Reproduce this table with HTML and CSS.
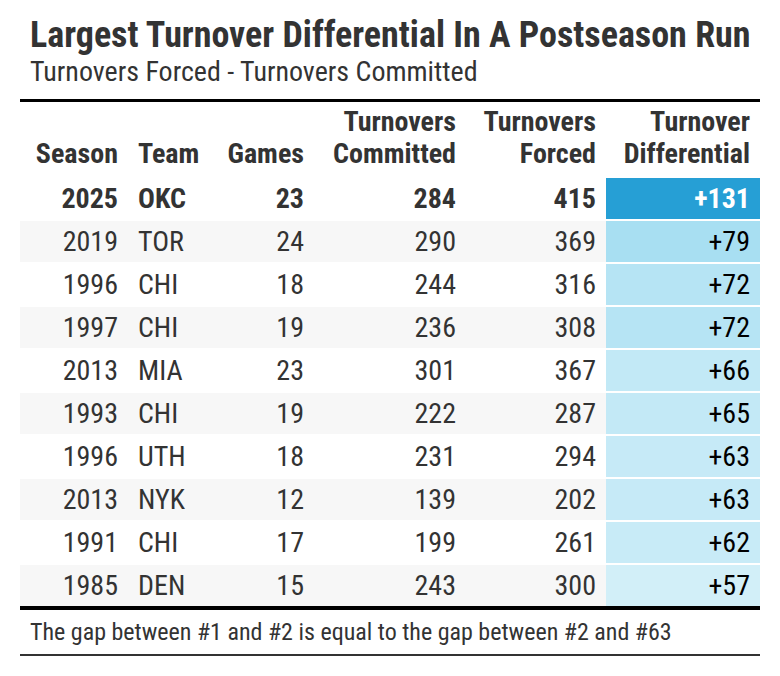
FILE: index.html
```html
<!DOCTYPE html>
<html>
<head>
<meta charset="utf-8">
<link rel="stylesheet" href="styles.css">
</head>
<body>
<div class="wrap">
  <div class="head">
    <h1 class="title">Largest Turnover Differential In A Postseason Run</h1>
    <div class="subtitle">Turnovers Forced - Turnovers Committed</div>
  </div>
  <table class="tbl">
    <colgroup>
      <col class="c-season"><col class="c-team"><col class="c-games"><col class="c-com"><col class="c-for"><col class="c-diff">
    </colgroup>
    <thead>
      <tr>
        <th class="r">Season</th>
        <th class="l">Team</th>
        <th class="r">Games</th>
        <th class="r">Turnovers<br>Committed</th>
        <th class="r">Turnovers<br>Forced</th>
        <th class="r">Turnover<br>Differential</th>
      </tr>
    </thead>
    <tbody>
      <tr class="top">
        <td class="r">2025</td><td class="l">OKC</td><td class="r">23</td><td class="r">284</td><td class="r">415</td><td class="r diff dark" style="background:#269fd5">+131</td>
      </tr>
      <tr class="alt">
        <td class="r">2019</td><td class="l">TOR</td><td class="r">24</td><td class="r">290</td><td class="r">369</td><td class="r diff" style="background:#a8dff2">+79</td>
      </tr>
      <tr>
        <td class="r">1996</td><td class="l">CHI</td><td class="r">18</td><td class="r">244</td><td class="r">316</td><td class="r diff" style="background:#b6e4f4">+72</td>
      </tr>
      <tr class="alt">
        <td class="r">1997</td><td class="l">CHI</td><td class="r">19</td><td class="r">236</td><td class="r">308</td><td class="r diff" style="background:#b6e4f4">+72</td>
      </tr>
      <tr>
        <td class="r">2013</td><td class="l">MIA</td><td class="r">23</td><td class="r">301</td><td class="r">367</td><td class="r diff" style="background:#c2e9f6">+66</td>
      </tr>
      <tr class="alt">
        <td class="r">1993</td><td class="l">CHI</td><td class="r">19</td><td class="r">222</td><td class="r">287</td><td class="r diff" style="background:#c3e9f6">+65</td>
      </tr>
      <tr>
        <td class="r">1996</td><td class="l">UTH</td><td class="r">18</td><td class="r">231</td><td class="r">294</td><td class="r diff" style="background:#c6eaf7">+63</td>
      </tr>
      <tr class="alt">
        <td class="r">2013</td><td class="l">NYK</td><td class="r">12</td><td class="r">139</td><td class="r">202</td><td class="r diff" style="background:#c6eaf7">+63</td>
      </tr>
      <tr>
        <td class="r">1991</td><td class="l">CHI</td><td class="r">17</td><td class="r">199</td><td class="r">261</td><td class="r diff" style="background:#c8ebf7">+62</td>
      </tr>
      <tr class="alt last">
        <td class="r">1985</td><td class="l">DEN</td><td class="r">15</td><td class="r">243</td><td class="r">300</td><td class="r diff" style="background:#d2eff8">+57</td>
      </tr>
    </tbody>
  </table>
  <div class="foot">The gap between #1 and #2 is equal to the gap between #2 and #63</div>
</div>
</body>
</html>
```
FILE: styles.css
```css
html, body {
  margin: 0;
  padding: 0;
  background: #fff;
}
body {
  font-family: "Roboto Condensed", "Roboto", sans-serif;
  font-stretch: condensed;
  color: #333;
}
.wrap {
  padding: 15px 20px 0 20px;
  width: 740px;
}
.head {
  padding: 0 0 10px 10px;
  white-space: nowrap;
}
.title {
  margin: 0;
  font-size: 36px;
  font-weight: 700;
  line-height: 40px;
  color: #333;
}
.subtitle {
  font-size: 28px;
  line-height: 34px;
  color: #333;
}
.tbl {
  width: 740px;
  table-layout: fixed;
  border-collapse: separate;
  border-spacing: 0;
  border-top: 3px solid #000;
}
.c-season { width: 108px; }
.c-team { width: 86px; }
.c-games { width: 100px; }
.c-com { width: 152px; }
.c-for { width: 140px; }
.c-diff { width: 154px; }
th {
  font-size: 28px;
  font-weight: 700;
  line-height: 32px;
  vertical-align: bottom;
  padding: 4px 10px 8px 10px;
  color: #333;
}
td {
  font-size: 28px;
  line-height: 41px;
  height: 41px;
  padding: 0 10px;
  border-bottom: 2px solid #fff;
  color: #333;
}
.r { text-align: right; }
.l { text-align: left; }
tr.alt td { background: #f7f7f7; }
tr.top td { font-weight: 700; }
td.diff { color: #000; }
td.diff.dark { color: #fff; }
tr.last td { border-bottom: 4px solid #000; }
.foot {
  font-size: 24px;
  line-height: 28px;
  padding: 8px 10px 8px 10px;
  border-bottom: 2px solid #333;
  color: #333;
}
```
